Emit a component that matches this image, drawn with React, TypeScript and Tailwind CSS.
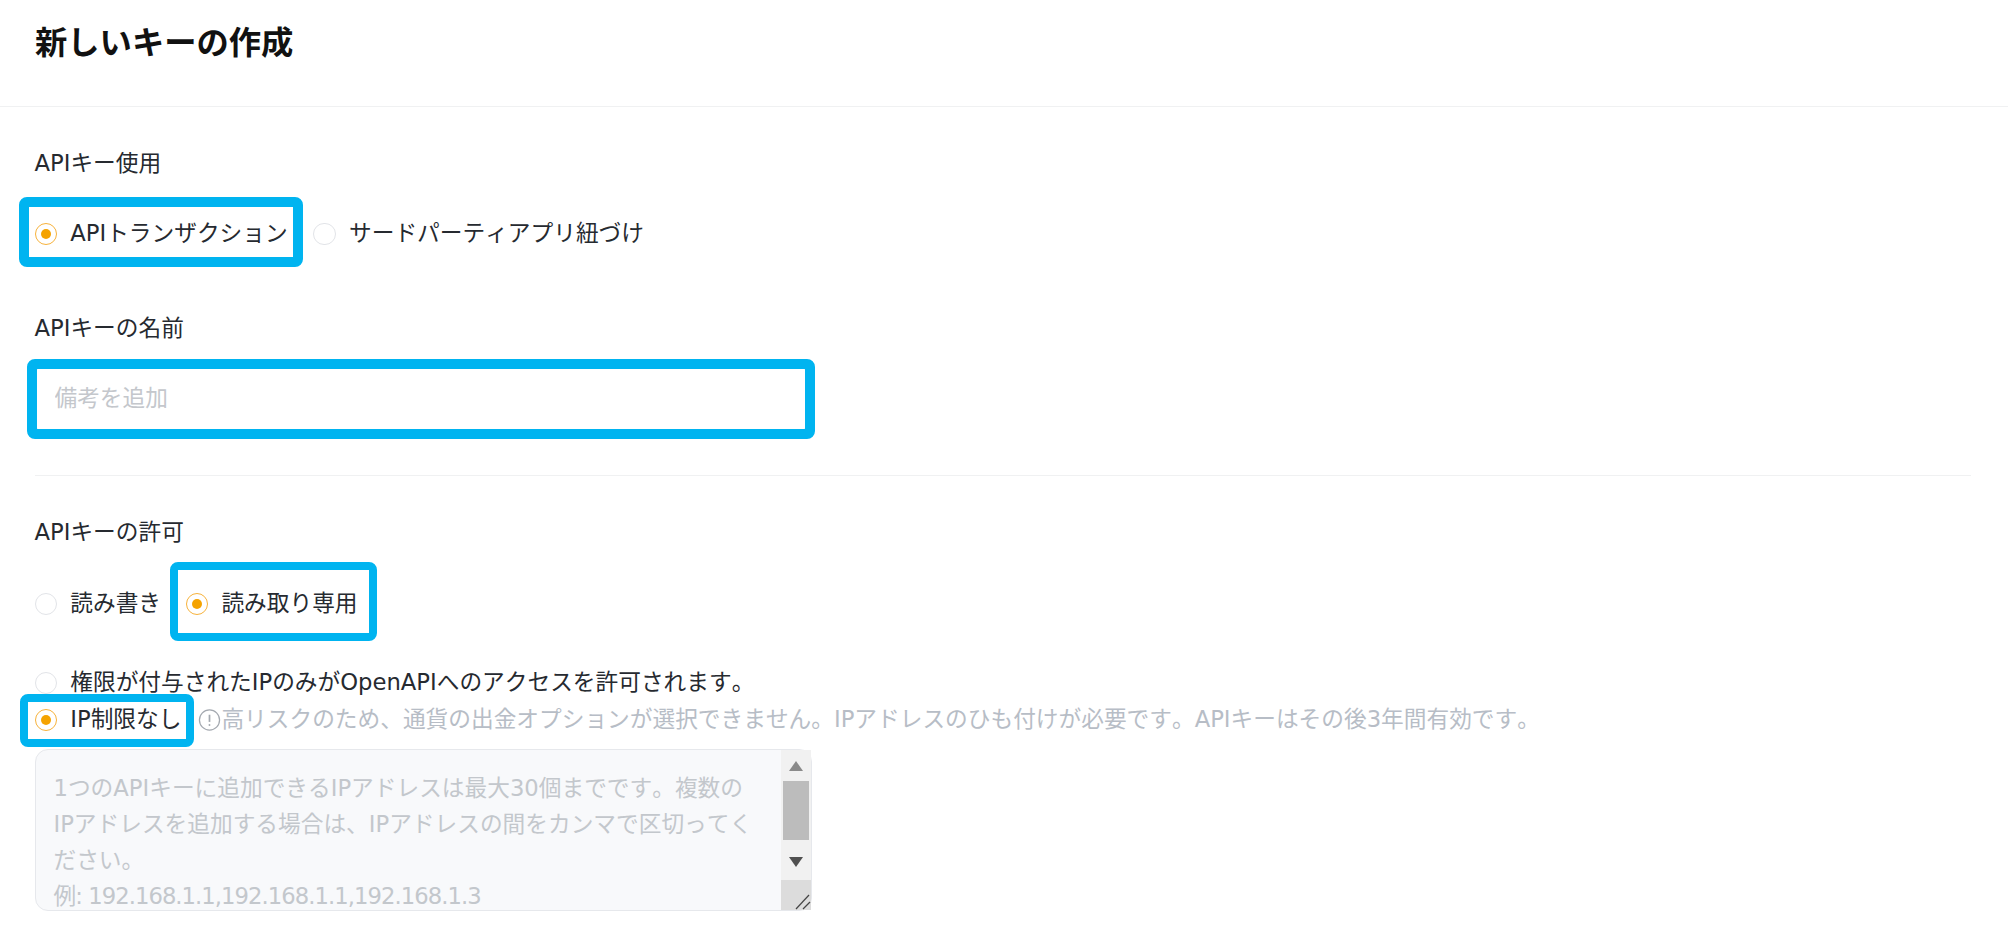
import React from "react";

function Radio({ checked }: { checked?: boolean }) {
  return checked ? (
    <span className="flex h-[22.4px] w-[22.4px] shrink-0 items-center justify-center rounded-full border-[1.6px] border-[#f7b23b] bg-white">
      <span className="h-[10px] w-[10px] rounded-full bg-[#f5a300]" />
    </span>
  ) : (
    <span className="block h-[22.4px] w-[22.4px] shrink-0 rounded-full border-[1.6px] border-[#e2e4e8] bg-white" />
  );
}

function Option({ checked, label }: { checked?: boolean; label: string }) {
  return (
    <span className="flex items-center gap-[13.4px] whitespace-nowrap">
      <Radio checked={checked} />
      <span className="-translate-y-[1px]">{label}</span>
    </span>
  );
}

export default function App() {
  return (
    <div className="min-h-screen w-full overflow-hidden bg-white font-['DejaVu_Sans','Noto_Sans_CJK_JP',sans-serif] text-[22.7px] leading-[36px] text-[#262a30] [font-kerning:none]">
      <header className="h-[107px] border-b-[1.6px] border-[#f0f1f2] pl-[35px] pt-[18px]">
        <h1 className="text-[32.3px] font-bold leading-[51px] text-[#111111]">新しいキーの作成</h1>
      </header>

      <main className="pl-[34.5px] pr-[37px] pt-[38px]">
        <div>APIキー使用</div>
        <div className="mt-[35px] flex gap-[25.6px]">
          <span className="relative">
            <Option checked label="APIトランザクション" />
            <span className="absolute -bottom-[15px] -left-[16px] -right-[15px] -top-[19px] rounded-[8px] border-[10px] border-[#00b4f0]" />
          </span>
          <Option label="サードパーティアプリ紐づけ" />
        </div>

        <div className="mt-[58px]">APIキーの名前</div>
        <div className="relative mt-[21px] w-[772px]">
          <input
            placeholder="備考を追加"
            className="h-[64px] w-full rounded-[6px] border border-[#e6e8ec] bg-white px-[19px] pb-[3px] text-[22.7px] outline-none placeholder:text-[#c4c7cc]"
          />
          <span className="pointer-events-none absolute -inset-[8px] rounded-[8px] border-[10px] border-[#00b4f0]" />
        </div>

        <div className="mt-[44px] border-t-[1.6px] border-[#f0f1f2]" />

        <div className="mt-[38px]">APIキーの許可</div>
        <div className="mt-[36px] flex gap-[24.6px]">
          <Option label="読み書き" />
          <span className="relative">
            <Option checked label="読み取り専用" />
            <span className="absolute -bottom-[19px] -left-[15.5px] -right-[19px] -top-[24px] rounded-[8px] border-[8px] border-[#00b4f0]" />
          </span>
        </div>

        <div className="mt-[43px]">
          <Option label="権限が付与されたIPのみがOpenAPIへのアクセスを許可されます。" />
        </div>
        <div className="mt-px flex items-center text-[#b7bdc6]">
          <span className="relative text-[#262a30]">
            <Option checked label="IP制限なし" />
            <span className="absolute -bottom-[9px] -left-[15px] -right-[13px] -top-[8px] rounded-[8px] border-[8px] border-[#00b4f0]" />
          </span>
          <svg viewBox="0 0 24 24" className="ml-[17px] h-[24px] w-[23px] shrink-0" fill="none" stroke="#a4a9b0" strokeWidth="1.3">
            <circle cx="12" cy="12" r="10.5" />
            <path d="M12 6.5v7.5" strokeWidth="1.8" />
            <circle cx="12" cy="17.3" r="1" fill="#a4a9b0" stroke="none" />
          </svg>
          <span className="-translate-y-[1px] whitespace-nowrap">高リスクのため、通貨の出金オプションが選択できません。IPアドレスのひも付けが必要です。APIキーはその後3年間有効です。</span>
        </div>

        <div className="mt-[11px] flex h-[162px] w-[777px] rounded-[13px] border-[1.6px] border-[#e6e8ec] bg-[#f8f9fb]">
          <div className="min-w-0 flex-1 overflow-hidden whitespace-nowrap rounded-l-[12px] pl-[18px] pt-[19.5px] text-[#c3c7cc]">
            <div>1つのAPIキーに追加できるIPアドレスは最大30個までです。複数の</div>
            <div>IPアドレスを追加する場合は、IPアドレスの間をカンマで区切ってく</div>
            <div>ださい。</div>
            <div className="tracking-[-0.95px]">例: 192.168.1.1,192.168.1.1,192.168.1.3</div>
          </div>
          <div className="flex w-[30px] shrink-0 flex-col bg-[#f1f1f1]">
            <div className="flex h-[31px] items-center justify-center pt-[1px]">
              <svg viewBox="0 0 14 10" className="h-[10px] w-[14px]"><path d="M7 0L14 10H0Z" fill="#8a8a8a" /></svg>
            </div>
            <div className="mx-[2px] h-[59px] bg-[#bcbcbc]" />
            <div className="flex h-[39px] items-end justify-center pb-[12px]">
              <svg viewBox="0 0 14 10" className="h-[10px] w-[14px]"><path d="M0 0H14L7 10Z" fill="#505050" /></svg>
            </div>
            <div className="relative mt-[1px] flex-1 bg-[#dcdcdc]">
              <svg viewBox="0 0 16 16" className="absolute bottom-0 right-0 h-[16px] w-[16px]" fill="none" stroke="#444444" strokeWidth="1.2">
                <path d="M1 15L14 1" />
                <path d="M8 15L15 8" />
              </svg>
            </div>
          </div>
        </div>
      </main>
    </div>
  );
}
